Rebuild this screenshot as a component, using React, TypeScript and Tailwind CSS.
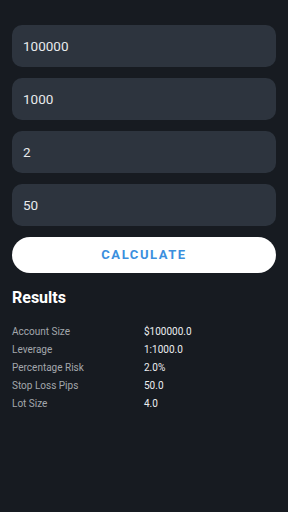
import { useState } from 'react';

const fields = ['100000', '1000', '2', '50'];

const results = [
  ['Account Size', '$100000.0'],
  ['Leverage', '1:1000.0'],
  ['Percentage Risk', '2.0%'],
  ['Stop Loss Pips', '50.0'],
  ['Lot Size', '4.0'],
];

export default function App() {
  const [values, setValues] = useState(fields);

  return (
    <div
      className="min-h-[512px] bg-[#171b21] px-3 pt-[25px]"
      style={{ fontFamily: 'Roboto, "Noto Sans", sans-serif' }}
    >
      <div className="flex flex-col gap-[11px]">
        {values.map((v, i) => (
          <input
            key={i}
            value={v}
            onChange={(e) =>
              setValues((prev) => prev.map((p, j) => (j === i ? e.target.value : p)))
            }
            className="h-[42px] w-full rounded-[10px] bg-[#2d343e] px-[11px] font-[Roboto] text-[13.5px] text-[#e8eaec] outline-none"
          />
        ))}
        <button className="h-9 w-full rounded-full bg-white text-[13px] font-bold tracking-[0.12em] text-[#3b8fde]">
          CALCULATE
        </button>
      </div>

      <h2 className="mt-[13px] text-base leading-6 font-bold text-white">Results</h2>

      <div className="mt-[13px] grid grid-cols-[132px_1fr] text-[10px] leading-[18px]">
        {results.map(([label, value]) => (
          <div key={label} className="contents">
            <span className="text-[#a3a7ac]">{label}</span>
            <span className="text-[#eceef0]">{value}</span>
          </div>
        ))}
      </div>
    </div>
  );
}
